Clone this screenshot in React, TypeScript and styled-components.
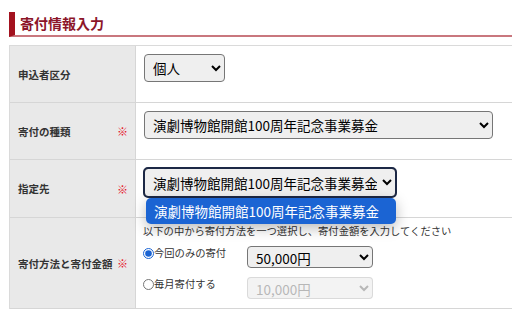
import React from "react";
import styled, { createGlobalStyle } from "styled-components";

const GlobalStyle = createGlobalStyle`
  html, body {
    margin: 0;
    padding: 0;
    background: #fff;
    overflow: hidden;
  }

  body {
    font-family: "Noto Sans CJK JP", "Noto Sans", sans-serif;
    color: #333;
  }
`;

const StyledPage = styled.div`
  padding: 12px 0 0 9px;
`;

const StyledSectionTitle = styled.h2`
  margin: 0 0 8px 0;
  padding-left: 5px;
  border-left: 6px solid #a3121f;
  border-bottom: 2px solid #c9777e;
  color: #8c1529;
  font-size: 14px;
  font-weight: bold;
  line-height: 23px;
  height: 23px;
`;

const StyledFormTable = styled.div`
  display: grid;
  grid-template-columns: 126px 1fr;
  border-top: 1px solid #dadada;
  border-left: 1px solid #dadada;
`;

const StyledLabelCell = styled.div<{ $h: number }>`
  display: flex;
  align-items: center;
  justify-content: space-between;
  height: ${(p) => p.$h}px;
  padding: 0 7px 0 8px;
  background: #e9e9e9;
  border-right: 1px solid #d6d6d6;
  border-bottom: 1px solid #d6d6d6;
  font-size: 10.5px;
  font-weight: bold;
  color: #333;
  box-sizing: border-box;
`;

const StyledRequired = styled.span`
  color: #e60f1e;
  font-size: 11px;
  font-weight: 900;
`;

const StyledValueCell = styled.div<{ $h: number; $top: number }>`
  display: flex;
  flex-direction: column;
  align-items: flex-start;
  height: ${(p) => p.$h}px;
  padding: ${(p) => p.$top}px 0 0 8px;
  border-bottom: 1px solid #d6d6d6;
  box-sizing: border-box;
`;

const StyledSelect = styled.select<{ $w: number; $h: number; $focused?: boolean }>`
  width: ${(p) => p.$w}px;
  height: ${(p) => p.$h}px;
  margin: 0;
  padding: 0 2px 0 4px;
  font-family: "Noto Sans CJK JP", sans-serif;
  font-size: 13.5px;
  color: #000;
  border-radius: 4px;
  outline: ${(p) => (p.$focused ? "2px solid #1c2845" : "none")};
  outline-offset: -1px;

  &:disabled {
    color: #9a9a9a;
  }
`;

const StyledSelectWrap = styled.div`
  position: relative;
`;

const StyledOptionPopup = styled.div`
  position: absolute;
  top: calc(100% + 1px);
  left: 2px;
  right: 0;
  height: 26px;
  padding-left: 8px;
  display: flex;
  align-items: center;
  background: #1b64d3;
  color: #fff;
  font-size: 13.5px;
  border-radius: 5px;
  box-shadow: 0 4px 14px rgba(0, 0, 0, 0.28);
  z-index: 2;
`;

const StyledNote = styled.div`
  font-size: 10.3px;
  color: #333;
  line-height: 14px;
  margin: 0 0 8px -1px;
`;

const StyledRadioGrid = styled.div`
  display: grid;
  grid-template-columns: 103px auto;
  row-gap: 9px;
  align-items: start;
`;

const StyledRadioLabel = styled.label`
  display: flex;
  align-items: center;
  font-size: 10.3px;
  color: #333;
  line-height: 14px;
  margin-left: -1px;

  input {
    width: 11px;
    height: 11px;
    margin: 0;
    accent-color: #1b64d3;
  }
`;

export default function App() {
  return (
    <>
      <GlobalStyle />
      <StyledPage>
        <StyledSectionTitle>寄付情報入力</StyledSectionTitle>
        <StyledFormTable>
          <StyledLabelCell $h={57}>申込者区分</StyledLabelCell>
          <StyledValueCell $h={57} $top={8}>
            <StyledSelect $w={81} $h={28} defaultValue="個人">
              <option>個人</option>
              <option>法人</option>
            </StyledSelect>
          </StyledValueCell>

          <StyledLabelCell $h={57}>
            寄付の種類<StyledRequired>※</StyledRequired>
          </StyledLabelCell>
          <StyledValueCell $h={57} $top={8}>
            <StyledSelect $w={349} $h={28}>
              <option>演劇博物館開館100周年記念事業募金</option>
            </StyledSelect>
          </StyledValueCell>

          <StyledLabelCell $h={58}>
            指定先<StyledRequired>※</StyledRequired>
          </StyledLabelCell>
          <StyledValueCell $h={58} $top={8}>
            <StyledSelectWrap>
              <StyledSelect $w={252} $h={29} $focused>
                <option>演劇博物館開館100周年記念事業募金</option>
              </StyledSelect>
              <StyledOptionPopup>演劇博物館開館100周年記念事業募金</StyledOptionPopup>
            </StyledSelectWrap>
          </StyledValueCell>

          <StyledLabelCell $h={91}>
            寄付方法と寄付金額<StyledRequired>※</StyledRequired>
          </StyledLabelCell>
          <StyledValueCell $h={91} $top={6}>
            <StyledNote>
              以下の中から寄付方法を一つ選択し、寄付金額を入力してください
            </StyledNote>
            <StyledRadioGrid>
              <StyledRadioLabel>
                <input type="radio" name="method" defaultChecked />
                今回のみの寄付
              </StyledRadioLabel>
              <StyledSelect $w={126} $h={22} defaultValue="50,000円">
                <option>10,000円</option>
                <option>30,000円</option>
                <option>50,000円</option>
              </StyledSelect>
              <StyledRadioLabel>
                <input type="radio" name="method" />
                毎月寄付する
              </StyledRadioLabel>
              <StyledSelect $w={126} $h={22} disabled defaultValue="10,000円">
                <option>10,000円</option>
              </StyledSelect>
            </StyledRadioGrid>
          </StyledValueCell>
        </StyledFormTable>
      </StyledPage>
    </>
  );
}
